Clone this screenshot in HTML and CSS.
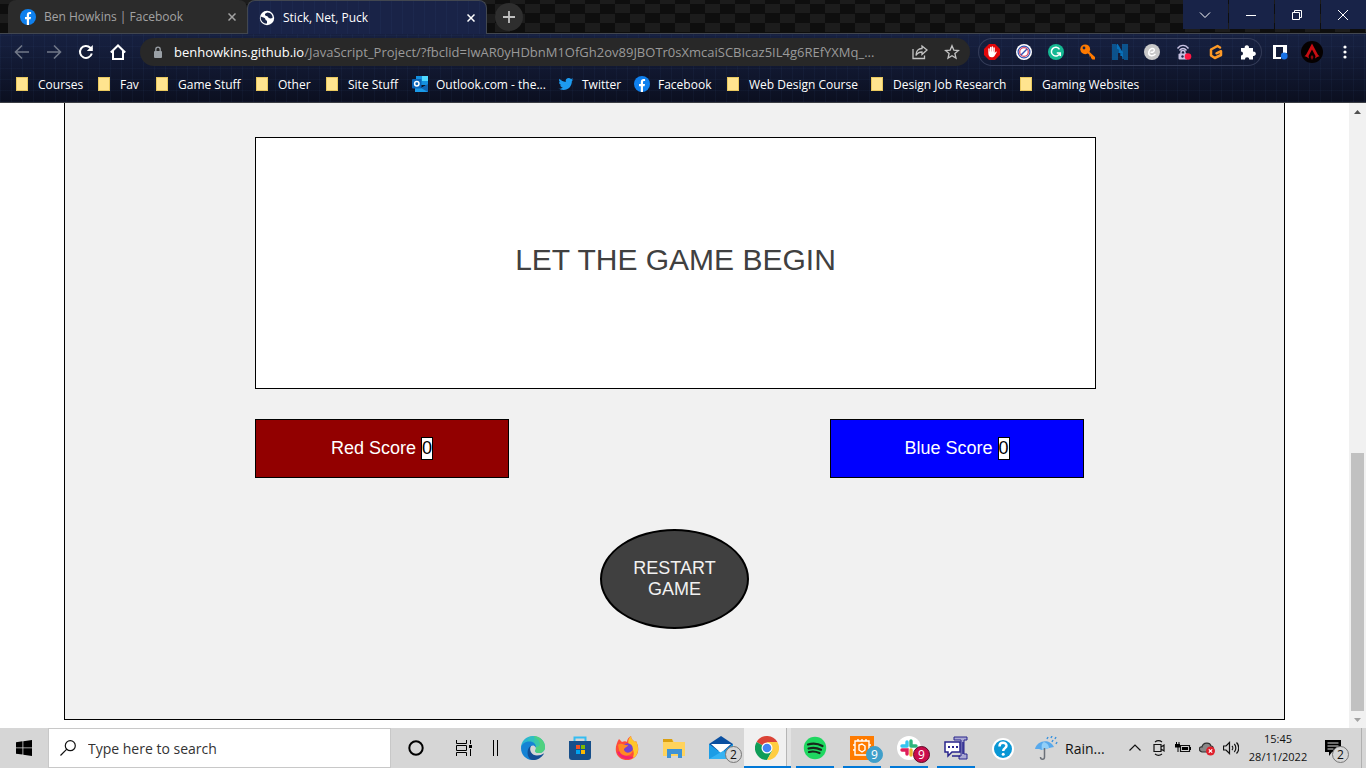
FILE: index.html
```html
<!DOCTYPE html>
<html lang="en">
<head>
<meta charset="utf-8">
<title>Stick, Net, Puck</title>
<link rel="stylesheet" href="styles.css">
</head>
<body>
<header class="chrome">
  <div class="tabstrip">
    <div class="tab">
      <svg class="fav" viewBox="0 0 16 16"><circle cx="8" cy="8" r="8" fill="#0f80ee"/><path d="M6.800 16V10.200H5V8h1.800V6.200c0-2 1.100-3.100 2.800-3.100.8 0 1.500.1 1.500.1v1.900h-.9c-.9 0-1.200.5-1.200 1.200V8h2l-.4 2.200H9V16z" fill="#fff"/></svg>
      <span class="tab-title">Ben Howkins | Facebook</span>
      <button class="tab-close" aria-label="Close tab"><svg viewBox="0 0 8 8"><path d="M.5.5l7 7M7.500.5l-7 7"/></svg></button>
    </div>
    <div class="tab active">
      <svg class="fav" viewBox="0 0 16 16"><circle cx="8" cy="8" r="7.200" fill="#fff"/><path d="M1.800 6.500c1.500 1 2.400.8 3.700 1.500 1.300.6.500 2.500 2.500 2.800v2.700c-3.500.5-7-3-6.200-7zM8.500 2.500c-1.500.5-3 1-2.500 2.500.6 1.500 2.500.5 3 2 .5 1.300 2.500 2 4.500 1C14 5.500 11.800 2.500 8.500 2.500z" fill="#192548"/></svg>
      <span class="tab-title">Stick, Net, Puck</span>
      <button class="tab-close" aria-label="Close tab"><svg viewBox="0 0 8 8"><path d="M.5.5l7 7M7.500.5l-7 7"/></svg></button>
    </div>
    <button class="new-tab" aria-label="New tab"><svg viewBox="0 0 12 12"><path d="M6 0v12M0 6h12"/></svg></button>
    <div class="window-controls">
      <button aria-label="Search tabs"><svg viewBox="0 0 12 12"><path d="M1 3.500l5 5 5-5"/></svg></button>
      <button aria-label="Minimise"><svg viewBox="0 0 12 12"><path d="M1 6.500h10"/></svg></button>
      <button aria-label="Restore"><svg viewBox="0 0 12 12"><path d="M1.500 3.500h7v7h-7zM3.500 3.500v-2h7v7h-2"/></svg></button>
      <button aria-label="Close"><svg viewBox="0 0 12 12"><path d="M1 1l10 10M11 1L1 11"/></svg></button>
    </div>
  </div>

  <div class="toolbar">
    <button class="tool dim" aria-label="Back"><svg viewBox="0 0 16 16"><path d="M15 8H2M8 1.500L1.500 8 8 14.500"/></svg></button>
    <button class="tool dim" aria-label="Forward"><svg viewBox="0 0 16 16"><path d="M1 8h13M8 1.500L14.500 8 8 14.500"/></svg></button>
    <button class="tool" aria-label="Reload"><svg viewBox="0 0 16 16"><path d="M13.800 9.500A6 6 0 1 1 12.300 3.700L14 5.500"/><path d="M14.800 1v6H8.800z" fill="#fff" stroke="none"/></svg></button>
    <button class="tool" aria-label="Home"><svg viewBox="0 0 16 16"><path d="M.8 8.500L8 1.500l7.200 7M3 7v8h10V7"/></svg></button>
    <div class="address">
      <svg class="lock" viewBox="0 0 10 13"><rect x="1" y="5" width="8" height="7" rx="1" fill="#9aa0a6"/><path d="M2.800 5V3.400a2.200 2.200 0 0 1 4.400 0V5" fill="none" stroke="#9aa0a6" stroke-width="1.300"/></svg>
      <a class="url" href="#"><span>benhowkins.github.io</span>/JavaScript_Project/?fbclid=IwAR0yHDbnM1OfGh2ov89JBOTr0sXmcaiSCBIcaz5IL4g6REfYXMq_...</a>
      <button class="tool" aria-label="Share"><svg class="thin" viewBox="0 0 16 16"><path d="M1 5v9.500h11.500v-3M10 2l5 4-5 4.500V8C6.500 8 5 9.500 4 11.500c0-4 2-7 6-7z"/></svg></button>
      <button class="tool" aria-label="Bookmark"><svg class="thin" viewBox="0 0 16 16"><path d="M8 1.800l1.800 4.300 4.700.4-3.600 3 1.100 4.600L8 11.700l-4 2.400 1.100-4.600-3.600-3 4.700-.4z"/></svg></button>
    </div>
    <div class="extensions">
      <button class="tool" aria-label="Ad blocker"><svg class="plain" viewBox="0 0 16 16"><path d="M5 0h6l5 5v6l-5 5H5l-5-5V5z" fill="#e2070a"/><path d="M4.300 8.500V5a.7.7 0 0 1 1.400 0v2.500h.3V3.500a.7.7 0 0 1 1.400 0v4h.3V3a.7.7 0 0 1 1.400 0v4.500h.3V4a.7.700 0 0 1 1.400 0v5l1-1.300c.6-.5 1.200 0 .8.700L10.500 12c-.6 1-1.500 1.300-2.800 1.300-2.600 0-3.400-2-3.400-4.800z" fill="#fff"/></svg></button>
      <button class="tool" aria-label="Pop-up blocker"><svg class="plain" viewBox="0 0 16 16"><circle cx="8" cy="8" r="8" fill="#fff"/><circle cx="8" cy="8" r="5.900" fill="#fff" stroke="#3455b5" stroke-width="1.200"/><circle cx="8" cy="8" r="4.300" fill="none" stroke="#d94b66" stroke-width="1.300"/><path d="M5 11l6-6" stroke="#3455b5" stroke-width="1.500"/></svg></button>
      <button class="tool" aria-label="Grammar"><svg class="plain" viewBox="0 0 16 16"><circle cx="8" cy="8" r="8" fill="#15b893"/><path d="M11.500 5.300A4.400 4.400 0 1 0 12 9H8.800M12.300 8.300V12" fill="none" stroke="#fff" stroke-width="1.500"/></svg></button>
      <button class="tool" aria-label="Passwords"><svg class="plain" viewBox="0 0 16 16"><circle cx="5.200" cy="5.300" r="4.900" fill="#ff7a00"/><path d="M7 8.500L8.500 7 15 13v2.500h-2.500L11 14v-1.500H9.500V11z" fill="#ff7a00"/><circle cx="4" cy="4" r="1.400" fill="#192548"/></svg></button>
      <button class="tool" aria-label="Notes"><svg class="plain" viewBox="0 0 16 16"><path d="M1 0v16M3 0v16M5 1v15M7 4v5M9 7v5M11 0v15M13 0v16M15 0v16M5 2l6 11M5 0l6 10" stroke="#0871bb" stroke-width="1.300"/></svg></button>
      <button class="tool" aria-label="Clip"><svg class="plain" viewBox="0 0 16 16"><circle cx="8" cy="8" r="8" fill="#c8c8c8"/><path d="M6.500 8.200c2 .5 4-.5 3.800-2.300C10 3.500 5.500 4 4.800 8c-.6 4 3.500 5 6.700 2" fill="none" stroke="#fff" stroke-width="1.500"/></svg></button>
      <button class="tool" aria-label="VPN"><svg class="plain" viewBox="0 0 16 16"><path d="M1.500 4.500C4.500.3 9.500.3 12.500 4.500M3.500 6.500c2-2.700 5-2.700 7 0" fill="none" stroke="#c9c3e3" stroke-width="1.400"/><path d="M5 10V8.500a2 2 0 0 1 4 0V10" fill="none" stroke="#c9c3e3" stroke-width="1.400"/><rect x="2.500" y="9.500" width="9" height="6" rx="1" fill="#c9c3e3"/><circle cx="6.500" cy="12.500" r="1.200" fill="#192548"/><circle cx="12" cy="12.500" r="3.300" fill="#ff1744"/></svg></button>
      <button class="tool" aria-label="Rewards"><svg class="plain" viewBox="0 0 16 16"><path d="M12 3.500L9.500 2 3 5.500v6l3.800 2.500 6.200-3V7.200L8.500 9.300" fill="none" stroke="#ff9a26" stroke-width="2.500" stroke-linejoin="round" stroke-linecap="round"/></svg></button>
      <button class="tool" aria-label="Extensions"><svg class="plain" viewBox="0 0 16 16"><path d="M1 4h3.700a2.200 2.200 0 1 1 4.200 0H13v3.700a2.200 2.200 0 1 1 0 4.200v3.600H9.300a2.200 2.200 0 0 0-4.400 0H1v-4a2 2 0 0 0 0-4z" fill="#fff"/></svg></button>
    </div>
    <button class="tool" aria-label="Side panel"><svg class="plain" viewBox="0 0 16 16"><path d="M1 1h14v8h-4V3H4v10h5v2H1z" fill="#fff"/><circle cx="12.200" cy="12" r="3.400" fill="#1a73e8"/></svg></button>
    <button class="tool profile" aria-label="Profile"><svg class="plain" viewBox="0 0 22 22"><circle cx="11" cy="11" r="11" fill="#050000"/><path d="M11 2.500l5 9.500c.6 1.500 1.500 2.500 2.500 3.200-1.500.3-3 1-4.500 2.300l.5-2.500L11 8.500 7.500 15l.5 2.500c-1.500-1.300-3-2-4.500-2.300 1-.7 1.900-1.700 2.500-3.200z" fill="#c80d12"/><path d="M11 14l1.500 2-1.500 3-1.500-3z" fill="#8c090c"/></svg></button>
    <button class="tool" aria-label="Menu"><svg class="plain" viewBox="0 0 16 16"><g fill="#fff"><circle cx="9" cy="3" r="1.600"/><circle cx="9" cy="8" r="1.600"/><circle cx="9" cy="13" r="1.600"/></g></svg></button>
  </div>

  <nav class="bookmarks">
    <a href="#"><i class="folder"></i>Courses</a>
    <a href="#"><i class="folder"></i>Fav</a>
    <a href="#"><i class="folder"></i>Game Stuff</a>
    <a href="#"><i class="folder"></i>Other</a>
    <a href="#"><i class="folder"></i>Site Stuff</a>
    <a href="#"><svg class="fav" viewBox="0 0 16 16"><path d="M4 0h12v9H4z" fill="#1490df"/><path d="M10 0h6v5h-6z" fill="#50d9ff"/><path d="M3 8l6.500 4L16 8v8H3z" fill="#1a9ae8"/><path d="M16 8v8L9 12z" fill="#1066b5"/><rect y="3" width="9.500" height="9.500" rx="1" fill="#0a64b8"/><circle cx="4.800" cy="7.800" r="2.200" fill="none" stroke="#fff" stroke-width="1.500"/></svg>Outlook.com - the...</a>
    <a href="#"><svg class="fav" viewBox="0 0 16 16"><path d="M1.500 2.800C3.200 4.700 5.200 5.700 7.700 5.900 7.200 3.500 8.800 2 10.700 2c1 0 1.700.4 2.300 1l2-.8-1.300 1.700 1.700-.4-1.500 1.500C14 10 10.500 14 5.500 14c-2 0-3.700-.5-5-1.400 1.700.2 3.200-.3 4.300-1.200-1.400-.1-2.400-1-2.800-2.200h1.300C1.900 8.700 1 7.600 1 6.100l1.300.4C1 5.500.7 4 1.500 2.800z" fill="#1d9bf0"/></svg>Twitter</a>
    <a href="#"><svg class="fav" viewBox="0 0 16 16"><circle cx="8" cy="8" r="8" fill="#0f80ee"/><path d="M6.800 16V10.200H5V8h1.800V6.200c0-2 1.100-3.100 2.800-3.100.8 0 1.500.1 1.500.1v1.900h-.9c-.9 0-1.200.5-1.200 1.200V8h2l-.4 2.200H9V16z" fill="#fff"/></svg>Facebook</a>
    <a href="#"><i class="folder"></i>Web Design Course</a>
    <a href="#"><i class="folder"></i>Design Job Research</a>
    <a href="#"><i class="folder"></i>Gaming Websites</a>
  </nav>
</header>

<div class="viewport">
  <main class="game">
    <section class="board"><p>LET THE GAME BEGIN</p></section>
    <section class="scores">
      <div class="score red">Red Score <span>0</span></div>
      <div class="score blue">Blue Score <span>0</span></div>
    </section>
    <button class="restart">RESTART GAME</button>
  </main>
  <div class="scrollbar">
    <svg viewBox="0 0 17 17"><path d="M5 11l3.500-4 3.500 4z" fill="#505050"/></svg>
    <div class="thumb"></div>
    <svg viewBox="0 0 17 17"><path d="M5 7l3.500 4L12 7z" fill="#a3a3a3"/></svg>
  </div>
</div>

<footer class="taskbar">
  <button class="start" aria-label="Start"><svg viewBox="0 0 16 16"><path d="M0 2.200l6.500-.9v6.200H0zM7.300 1.200L16 0v7.500H7.300zM0 8.300h6.500v6.300L0 13.700zM7.300 8.300H16V16l-8.700-1.200z"/></svg></button>
  <label class="search">
    <svg viewBox="0 0 16 16"><circle cx="10.300" cy="5.700" r="5" fill="none" stroke="#111" stroke-width="1.200"/><path d="M6.800 9.200L.5 15.500" stroke="#111" stroke-width="1.200"/></svg>
    <input type="text" placeholder="Type here to search" aria-label="Type here to search">
  </label>
  <button class="app cortana" aria-label="Cortana"><svg class="s16" viewBox="0 0 16 16"><circle cx="8" cy="8" r="6.700" fill="none" stroke="#000" stroke-width="2"/></svg></button>
  <button class="app view" aria-label="Task view"><svg class="s16" viewBox="0 0 16 16"><path d="M.5 0v3.500h10V0M.5 16v-3.500h10V16M.5 5.500h10v5H.5zM14.500 0v4M14.500 9v7" fill="none" stroke="#000"/><path d="M13 5h3v3h-3z"/></svg></button>
  <div class="divider"></div>
  <button class="app" aria-label="Edge"><svg viewBox="0 0 24 24"><path d="M0 12C0 5 5 0 12 0s12 5 12 11c0 4-3 6-6 6-3.500 0-4.500-1.500-3.500-3 1.500-3-1-6-5-6-5 0-9 3-9.500 4z" fill="#2bb5d0"/><path d="M13 0c6 .5 11 5 11 11 0 4-3 6-6 6-3.500 0-4.500-1.500-3.500-3 1-2 .5-4-1-5z" fill="#4fd17f"/><path d="M8 1C13-1 18 3 19 8c-1 3-3 3-4 3-1-3-4-6-9-5z" fill="#32c3b8" opacity=".7"/><path d="M0 12c.5-4 4-6.500 8.500-6.500 4 0 6.500 2.500 6.500 6-2-3-5-2.500-6 0-2 5 2 11.500 8 11C14 23.700 12 24 11 24 5 23.500 0 19 0 12z" fill="#1683d4"/><path d="M10 9.800c-2.500 5 1 9.700 6 9.700 3 0 5-1 6.500-2 .3-.1.500.1.300.4C20.500 21.700 16.500 24 12 24 6 24 4.500 13 10 9.800z" fill="#134e94"/></svg></button>
  <button class="app" aria-label="Store"><svg viewBox="0 0 24 24"><path d="M6.500 7V1.500h11V7" fill="none" stroke="#35bdf2" stroke-width="2"/><path d="M1 5h22v16a3 3 0 0 1-3 3H4a3 3 0 0 1-3-3z" fill="#174f8a"/><path d="M8 9h4v4H8z" fill="#f25022"/><path d="M13 9h4v4h-4z" fill="#7fba00"/><path d="M8 14h4v4H8z" fill="#00a4ef"/><path d="M13 14h4v4h-4z" fill="#ffb900"/></svg></button>
  <button class="app" aria-label="Firefox"><svg viewBox="0 0 24 24"><path d="M4 3l3 3c2-1 4-1 5 0 0-3 2-5 4-6 0 3 2 4 4 6l1-1c3 6 3 11 0 15-5 6-14 5-18 0C-1 15 1 8 4 3z" fill="#ff4b3b"/><path d="M16 0c0 3 2 4 4 6l1-1c4 8 2 15-4 18 3-5 2-10-2-13-3-3-2-7 1-10z" fill="#ffc629"/><path d="M2 16c3 7 11 9 17 5l-7-1-7-5z" fill="#f4236f"/><circle cx="12.500" cy="12.500" r="5.300" fill="#7542d0"/><path d="M3 9c4-3 6 1 10 0-1 3-4 2-4 5 2 4 6 3 9 0-1 7-12 8-14 0z" fill="#ff8a22"/></svg></button>
  <button class="app" aria-label="File Explorer"><svg viewBox="0 0 24 24"><path d="M1 3h9l2 3h11v14H1z" fill="#ffd35c"/><path d="M1 3h9l1 3H1z" fill="#dba010"/><path d="M5 13h15v9h-4v-4H9v4H5z" fill="#3e93d5"/></svg></button>
  <button class="app" aria-label="Mail"><svg viewBox="0 0 24 24"><path d="M0 8L12 0l12 8v7H0z" fill="#0a4fa0"/><path d="M2 8h20L12 17z" fill="#fff"/><path d="M0 8l12 9 12-9v15H0z" fill="#1c9de6"/><path d="M0 23L14 15l10 8z" fill="#36b3f3"/></svg><span class="badge">2</span></button>
  <button class="app current" aria-label="Chrome"><svg viewBox="0 0 24 24"><path d="M12 12L1.600 6A12 12 0 0 1 22.400 6z" fill="#db4437"/><path d="M12 12L1.600 6A12 12 0 0 0 12 24l5-9z" fill="#0f9d58"/><path d="M12 6h10.400A12 12 0 0 1 12 24l5-9z" fill="#ffcd40"/><circle cx="12" cy="12" r="5.500" fill="#fff"/><circle cx="12" cy="12" r="4.300" fill="#4285f4"/></svg></button>
  <button class="app running" aria-label="Spotify"><svg viewBox="0 0 24 24"><circle cx="12" cy="12" r="11.200" fill="#1ed760"/><path d="M5 8.500c5-1.500 10-1 14.500 1.500M5.500 12.500c4.500-1.300 8.500-.8 12.500 1.200M6 16c4-1 7-.6 10.500 1.100" fill="none" stroke="#17281c" stroke-width="2.200" stroke-linecap="round"/></svg></button>
  <button class="app running" aria-label="Auction app"><svg viewBox="0 0 24 24"><path d="M0 0h24v24H0z" fill="#ff7b00"/><path d="M5 5h14v14H5zM8 5V3m4 2V3m4 2V3M5 9H3m2 5H3m16-5h2M9 14V9l3-1 3 2v4l-3 2z" fill="none" stroke="#fff" stroke-width="1.400"/></svg><span class="badge cyan">9</span></button>
  <button class="app running" aria-label="Slack"><svg viewBox="0 0 24 24"><circle cx="12" cy="12" r="12" fill="#fff"/><g stroke-width="3.400" stroke-linecap="round"><path d="M10 6v4M5 10h5" stroke="#36c5f0"/><path d="M14 5v5M14 10h5" stroke="#2eb67d"/><path d="M14 14v5" stroke="#ecb22e"/><path d="M5 14h5v4" stroke="#e01e5a" fill="none"/></g></svg><span class="badge wine">9</span></button>
  <button class="app running" aria-label="Chat monitor"><svg viewBox="0 0 24 24"><path d="M10 1h13v3h-3v14h3v5h-8v-3h2V4h-7z" fill="#aaa8d3" stroke="#28248c"/><path d="M1 6h15v10H8l-4 4v-4H1z" fill="#fff" stroke="#28248c" stroke-width="1.500"/><path d="M4 10h2v2H4zm4 0h2v2H8zm4 0h2v2h-2z" fill="#28248c"/><path d="M8 20h8M19 6v12" stroke="#28248c" stroke-width="1.500"/></svg></button>
  <button class="app" aria-label="Help"><svg viewBox="0 0 24 24"><circle cx="12" cy="13" r="11" fill="#fff"/><circle cx="12" cy="13" r="9" fill="#0897d5"/><path d="M8.500 10.500c0-5 7-4.500 7-.7 0 2.400-3.300 2.300-3.300 5.200" fill="none" stroke="#fff" stroke-width="2.500"/><circle cx="12.200" cy="18.200" r="1.500" fill="#fff"/></svg></button>
  <button class="weather"><svg viewBox="0 0 24 24"><path d="M1 13C3 4 16 2 20 11l-5 1-3 1-4 1-3-1z" fill="#58a9ec"/><path d="M8 14C7 9 8 7 10 6c3 1 5 3 5 6z" fill="#91cff8"/><path d="M10.500 12v9c0 3-4 3-4 0" fill="none" stroke="#6b7078" stroke-width="1.500"/><path d="M14 1l-1 2m5-3l-1 2m5-1l-1 2m-2 1l-1 2m5 0l-1 2" stroke="#3d94dd" stroke-width="1.500"/></svg>Rain...</button>
  <div class="tray">
    <svg viewBox="0 0 16 16"><path d="M2.500 10.500L8 5l5.500 5.500"/></svg>
    <svg viewBox="0 0 16 16"><path d="M3 4.500h7v7H3zM10 7l3-2v6l-3-2M4 2c2-1.500 5-1.500 7 0M4 14c2 1.500 5 1.500 7 0"/></svg>
    <svg viewBox="0 0 16 16"><path d="M5.500 5.500h9v6h-9z"/><path d="M7 7h6v3H7zM15 7h1v3h-1zM0 4h5v3.500H3.500V12h-1V7.500H0zM1 2h1v2H1zM3.500 2h1v2h-1z" fill="#000" stroke="none"/></svg>
    <svg viewBox="0 0 16 16"><path d="M3 12C-1 11 0 6 3 7c1-5 8-5 9-1 3 0 3 5 0 6z" fill="#888" stroke="#333"/><circle cx="11.500" cy="11" r="4.500" fill="#e0202c" stroke="none"/><path d="M9.800 9.300l3.400 3.400m0-3.400l-3.400 3.400" stroke="#fff"/></svg>
    <svg viewBox="0 0 16 16"><path d="M.5 6h2.500l3.500-3.500v11L3 10H.5zM9 6c1 1 1 3 0 4M11.300 4c2 2 2 6 0 8M13.500 2.500c3 3 3 8 0 11"/></svg>
  </div>
  <div class="clock"><span>15:45</span><span>28/11/2022</span></div>
  <button class="notify" aria-label="Notifications"><svg viewBox="0 0 16 16"><path d="M0 0h16v12H7l-3 4v-4H0z"/><path d="M2.500 3h11M2.500 6h11M2.500 9h6" stroke="#ddd"/></svg><span class="badge">2</span></button>
  <div class="show-desktop"></div>
</footer>
</body>
</html>
```
FILE: styles.css
```css
* { box-sizing: border-box; }
body {
  margin: 0;
  height: 100vh;
  display: flex;
  flex-direction: column;
  background: #fff;
  font-family: "Open Sans", "Noto Sans", sans-serif;
  font-size: 12px;
  overflow: hidden;
}
button { border: 0; padding: 0; background: none; font: inherit; color: inherit; display: flex; align-items: center; justify-content: center; }
svg { display: block; flex: none; }
a { color: inherit; text-decoration: none; }

.chrome {
  flex: none;
  color: #fff;
  border-bottom: 1px solid #3c3e44;
  background:
    repeating-linear-gradient(90deg, rgba(80,120,180,.06) 0 1px, transparent 1px 11px),
    repeating-linear-gradient(0deg, rgba(80,120,180,.05) 0 1px, transparent 1px 11px),
    linear-gradient(#1a2549 0, #151e3c 45%, #0b0f20 100%);
}
.tabstrip {
  height: 34px;
  display: flex;
  padding-left: 8px;
  border-bottom: 1px solid #424750;
  background: repeating-conic-gradient(#1c1c1c 0 25%, #0e0e0e 0 50%) 0 4px / 30px 19px;
}
.tab {
  width: 239px;
  height: 33px;
  display: flex;
  align-items: center;
  padding: 0 11px 0 12px;
  border-radius: 8px 8px 0 0;
  background: #2b2b2b;
  color: #a3a3a3;
}
.tab.active {
  width: 240px;
  height: 34px;
  padding: 0 11px;
  color: #fff;
  border: 1px solid #424750;
  border-bottom: 0;
  background:
    repeating-linear-gradient(90deg, rgba(80,120,180,.06) 0 1px, transparent 1px 11px),
    #192347;
}
.fav { width: 16px; height: 16px; }
.tab-title { flex: 1; margin-left: 8px; white-space: nowrap; }
.tab-close svg { width: 8px; height: 8px; fill: none; stroke: currentColor; stroke-width: 1.5; }
.new-tab { width: 28px; height: 28px; margin: 3px 0 0 8px; border-radius: 50%; background: #2e2e2e; }
.new-tab svg { width: 12px; height: 12px; stroke: #c0c0c0; stroke-width: 1.8; }
.window-controls { margin-left: auto; display: flex; gap: 1px; height: 29px; }
.window-controls button { width: 45px; padding-right: 2px; background: #182348; }
.window-controls svg { width: 12px; height: 12px; fill: none; stroke: #fff; }

.toolbar { height: 36px; display: flex; align-items: center; padding: 0 6px; }
.tool { width: 32px; height: 28px; flex: none; }
.tool svg { width: 16px; height: 16px; fill: none; stroke: #fff; stroke-width: 2; }
.tool.dim svg { stroke: #717888; stroke-width: 1.6; }
.tool svg.thin { stroke: #c3c3c3; stroke-width: 1.3; }
.tool svg.plain { stroke: none; }
.tool.profile svg { width: 22px; height: 22px; }
.address {
  flex: 1;
  min-width: 0;
  height: 28px;
  margin: 0 8px 0 6px;
  padding: 0 2px 0 13px;
  display: flex;
  align-items: center;
  border-radius: 14px;
  background: #282828;
}
.lock { width: 10px; height: 13px; }
.url { flex: 1; min-width: 0; margin-left: 11px; overflow: hidden; white-space: nowrap; font-size: 13px; color: #9a9a9a; }
.url span { color: #fff; }
.extensions { display: flex; gap: 4px; height: 28px; margin-right: 2px; align-items: center; border-radius: 14px; box-shadow: inset 0 0 0 1px #343c58; }
.extensions .tool { width: 28px; }

.bookmarks {
  height: 32px;
  padding: 0 16px 4px;
  display: grid;
  grid-template-columns: 82px 58px 100px 70px 86px 146px 76px 93px 144px 149px auto;
  align-items: center;
}
.bookmarks a { display: flex; align-items: center; gap: 8px; white-space: nowrap; }
.folder { width: 12px; height: 14px; margin-right: 2px; border: 1px solid #e9c85e; background: #ffe48f; }

.viewport { flex: 1; min-height: 0; display: flex; font-family: "Liberation Sans", Arial, sans-serif; }
.game {
  flex: 1;
  margin: 0 64px 8px;
  padding: 34px 188px 90px 190px;
  border: 1px solid #000;
  border-top: 0;
  background: #f1f1f1;
  display: flex;
  flex-direction: column;
}
.board { height: 252px; border: 1px solid #000; background: #fff; display: flex; align-items: center; justify-content: center; padding-bottom: 6px; }
.board p { margin: 0; font-size: 30px; color: #404040; }
.scores { display: flex; justify-content: space-between; margin: 30px 12px 0 0; }
.score { width: 254px; height: 59px; border: 1px solid #000; display: flex; align-items: center; justify-content: center; gap: 5px; font-size: 18px; color: #fff; }
.score.red { background: #920000; }
.score.blue { background: #00f; }
.score span { border: 1px solid #000; background: #fff; color: #000; }
.restart { align-self: center; width: 149px; height: 100px; margin: 51px 2px 0 0; padding: 0 30px; border: 2px solid #000; border-radius: 50%; background: #404040; color: #f1f1f1; font-size: 18px; line-height: 21px; }

.scrollbar { width: 17px; flex: none; display: flex; flex-direction: column; background: #f1f1f1; }
.scrollbar svg { width: 17px; height: 17px; }
.thumb { width: 13px; height: 258px; margin: auto auto 0; background: #c1c1c1; }

.taskbar { height: 40px; flex: none; display: flex; align-items: stretch; background: #d6d6d6; color: #111; }
.start { width: 48px; }
.start svg { width: 16px; height: 16px; }
.search { width: 343px; display: flex; align-items: center; gap: 12px; padding-left: 11px; background: #fff; border: 1px solid #c8c8c8; }
.search svg { width: 16px; height: 16px; }
.search input { flex: 1; min-width: 0; border: 0; padding: 0; outline: 0; background: none; font: inherit; font-size: 14px; }
.search input::placeholder { color: #333; opacity: 1; }
.app { width: 47px; position: relative; }
.app svg { width: 24px; height: 24px; }
.app svg.s16 { width: 16px; height: 16px; }
.cortana { width: 50px; }
.view { width: 46px; }
.divider { width: 5px; height: 16px; margin: 12px 11px 0 6px; border: 1px solid #000; border-width: 0 1px; }
.current { padding-right: 2px; background: #f0f0f0; box-shadow: inset 0 -2px #0078d7; }
.current::after { content: ""; position: absolute; right: 0; top: 0; bottom: 2px; width: 4px; background: #e3e3e3; border-left: 1px solid #b5b5b5; }
.running { background: linear-gradient(#0078d7, #0078d7) center bottom / 38px 2px no-repeat; }
.badge { position: absolute; right: 2px; bottom: 5px; width: 17px; height: 17px; border: 1px solid #777; border-radius: 50%; background: #d6d6d6; color: #111; font-size: 12px; line-height: 15px; text-align: center; }
.badge.cyan { background: #3f9fca; border-color: #3f9fca; color: #fff; }
.badge.wine { background: #c90c4b; border-color: #5a0b26; color: #fff; }
.weather { gap: 7px; margin-left: 8px; font-size: 14px; }
.weather svg { width: 24px; height: 24px; }
.tray { display: flex; align-items: center; gap: 8px; margin-left: auto; }
.tray svg { width: 16px; height: 16px; fill: none; stroke: #111; stroke-width: 1.2; }
.clock { width: 78px; display: flex; flex-direction: column; justify-content: center; align-items: center; line-height: 18px; padding-bottom: 1px; font-size: 11px; }
.notify { width: 33px; position: relative; padding-right: 1px; }
.notify svg { width: 16px; height: 16px; }
.notify .badge { right: 1px; }
.show-desktop { width: 5px; margin-left: 11px; border-left: 1px solid #b0b0b0; }
```
